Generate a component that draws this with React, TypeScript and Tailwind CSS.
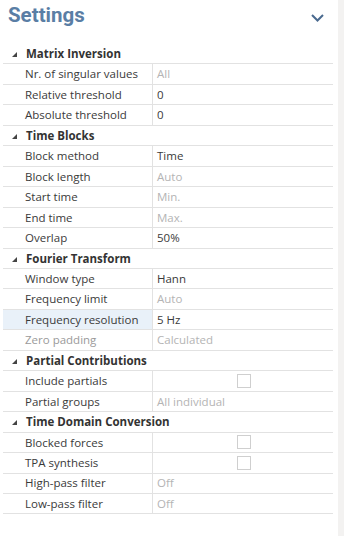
type Row = {
    label: string;
    value?: string;
    muted?: boolean;
    labelMuted?: boolean;
    checkbox?: boolean;
    selected?: boolean;
};

type Section = { title: string; rows: Row[] };

const sections: Section[] = [
    {
        title: 'Matrix Inversion',
        rows: [
            { label: 'Nr. of singular values', value: 'All', muted: true },
            { label: 'Relative threshold', value: '0' },
            { label: 'Absolute threshold', value: '0' },
        ],
    },
    {
        title: 'Time Blocks',
        rows: [
            { label: 'Block method', value: 'Time' },
            { label: 'Block length', value: 'Auto', muted: true },
            { label: 'Start time', value: 'Min.', muted: true },
            { label: 'End time', value: 'Max.', muted: true },
            { label: 'Overlap', value: '50%' },
        ],
    },
    {
        title: 'Fourier Transform',
        rows: [
            { label: 'Window type', value: 'Hann' },
            { label: 'Frequency limit', value: 'Auto', muted: true },
            { label: 'Frequency resolution', value: '5 Hz', selected: true },
            { label: 'Zero padding', value: 'Calculated', muted: true, labelMuted: true },
        ],
    },
    {
        title: 'Partial Contributions',
        rows: [
            { label: 'Include partials', checkbox: true },
            { label: 'Partial groups', value: 'All individual', muted: true },
        ],
    },
    {
        title: 'Time Domain Conversion',
        rows: [
            { label: 'Blocked forces', checkbox: true },
            { label: 'TPA synthesis', checkbox: true },
            { label: 'High-pass filter', value: 'Off', muted: true },
            { label: 'Low-pass filter', value: 'Off', muted: true },
        ],
    },
];

function SectionHeader({ title }: { title: string }) {
    return (
        <div className="h-[20.46px] flex items-center border-b border-[#e2e2e2]">
            <svg width="5" height="5" viewBox="0 0 5 5" className="ml-[9px] mr-[9px] mt-[2px]">
                <polygon points="5,0 5,5 0,5" fill="#444" />
            </svg>
            <span className="font-bold text-[#333] text-[11.5px]">{title}</span>
        </div>
    );
}

function PropRow({ row }: { row: Row }) {
    return (
        <div className="h-[20.46px] flex border-b border-[#e2e2e2]">
            <div
                className={`w-[150px] shrink-0 pl-[22px] flex items-center border-r border-[#e2e2e2] ${row.selected ? 'bg-[#e9f1f9]' : ''} ${row.labelMuted ? 'text-[#9a9a9a]' : 'text-[#3a3a3a]'}`}
            >
                {row.label}
            </div>
            <div className="flex-1 flex items-center pl-[4px]">
                {row.checkbox ? (
                    <div className="ml-[80px] w-[14px] h-[14px] border border-[#cfcfcf] bg-white" />
                ) : (
                    <span className={row.muted ? 'text-[#b4b4b4]' : 'text-[#3a3a3a]'}>{row.value}</span>
                )}
            </div>
        </div>
    );
}

export default function App() {
    return (
        <div
            className="w-[344px] h-[536px] flex bg-white overflow-hidden"
            style={{ fontFamily: '"Open Sans", "Noto Sans", sans-serif' }}
        >
            <div className="w-[338px] flex flex-col">
                {/* ── Title ── */}
                <div className="h-[44px] flex items-start justify-between pl-[8px] pr-[14px]">
                    <h1
                        className="text-[20.5px] font-bold text-[#5a7ea5] leading-none mt-[5px]"
                        style={{ fontFamily: 'Roboto, sans-serif' }}
                    >
                        Settings
                    </h1>
                    <svg width="13" height="8" viewBox="0 0 13 8" className="mt-[14px]">
                        <polyline points="1,1 6.5,6.5 12,1" fill="none" stroke="#4a6a8f" strokeWidth="2" />
                    </svg>
                </div>

                {/* ── Property grid ── */}
                <div className="ml-[3px] w-[330px] text-[11.5px] leading-none">
                    {sections.map((s) => (
                        <div key={s.title}>
                            <SectionHeader title={s.title} />
                            {s.rows.map((r) => (
                                <PropRow key={r.label} row={r} />
                            ))}
                        </div>
                    ))}
                </div>
            </div>
            <div className="flex-1 bg-[#f3f2f1]" />
        </div>
    );
}
